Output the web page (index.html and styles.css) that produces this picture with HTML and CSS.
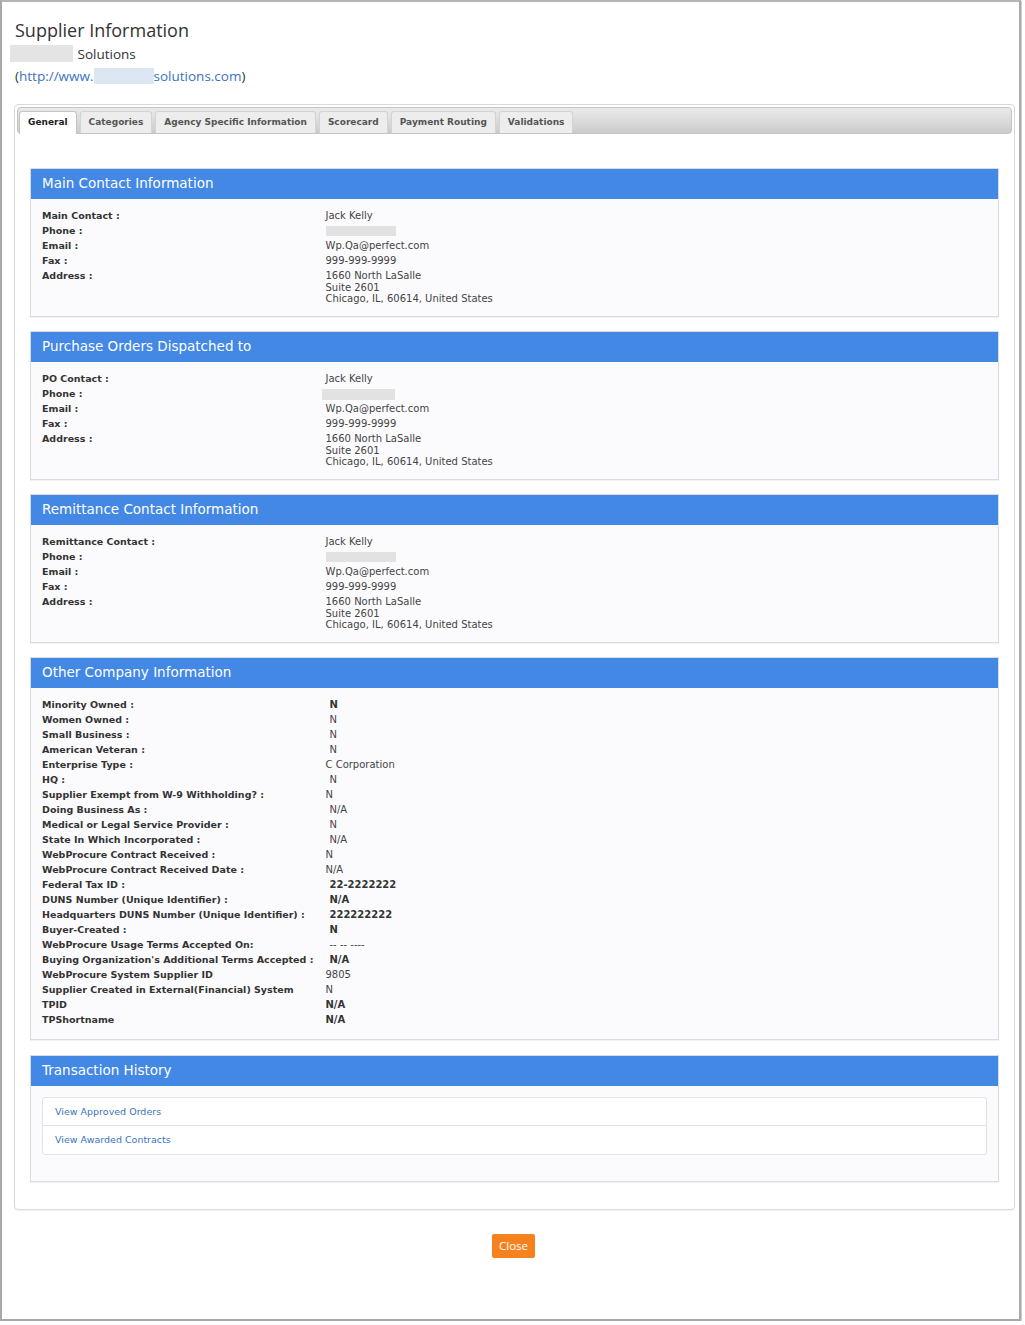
FILE: index.html
```html
<!DOCTYPE html>
<html>
<head>
<meta charset="utf-8">
<title>Supplier Information</title>
<link rel="stylesheet" href="styles.css">
</head>
<body>
<div class="frame">
  <div class="page">
    <h1 class="title">Supplier Information</h1>
    <div class="company"><span class="redact gray"></span> Solutions</div>
    <div class="url">(<a class="link">http://www.<span class="redact blue"></span>solutions.com</a>)</div>

    <div class="tabs">
      <ul class="tabnav">
        <li class="tab active">General</li>
        <li class="tab">Categories</li>
        <li class="tab">Agency Specific Information</li>
        <li class="tab">Scorecard</li>
        <li class="tab">Payment Routing</li>
        <li class="tab">Validations</li>
      </ul>
      <div class="tabbody">

        <section class="panel">
          <h2 class="panel-head">Main Contact Information</h2>
          <div class="panel-body">
            <div class="grid">
              <div class="lbl">Main Contact :</div><div class="val">Jack Kelly</div>
              <div class="lbl">Phone :</div><div class="val"><span class="phone"></span></div>
              <div class="lbl">Email :</div><div class="val">Wp.Qa@perfect.com</div>
              <div class="lbl">Fax :</div><div class="val">999-999-9999</div>
              <div class="lbl">Address :</div><div class="val addr">1660 North LaSalle<br>Suite 2601<br>Chicago, IL, 60614, United States</div>
            </div>
          </div>
        </section>

        <section class="panel">
          <h2 class="panel-head">Purchase Orders Dispatched to</h2>
          <div class="panel-body">
            <div class="grid">
              <div class="lbl">PO Contact :</div><div class="val">Jack Kelly</div>
              <div class="lbl">Phone :</div><div class="val"><span class="phone shift"></span></div>
              <div class="lbl">Email :</div><div class="val">Wp.Qa@perfect.com</div>
              <div class="lbl">Fax :</div><div class="val">999-999-9999</div>
              <div class="lbl">Address :</div><div class="val addr">1660 North LaSalle<br>Suite 2601<br>Chicago, IL, 60614, United States</div>
            </div>
          </div>
        </section>

        <section class="panel">
          <h2 class="panel-head">Remittance Contact Information</h2>
          <div class="panel-body">
            <div class="grid">
              <div class="lbl">Remittance Contact :</div><div class="val">Jack Kelly</div>
              <div class="lbl">Phone :</div><div class="val"><span class="phone"></span></div>
              <div class="lbl">Email :</div><div class="val">Wp.Qa@perfect.com</div>
              <div class="lbl">Fax :</div><div class="val">999-999-9999</div>
              <div class="lbl">Address :</div><div class="val addr">1660 North LaSalle<br>Suite 2601<br>Chicago, IL, 60614, United States</div>
            </div>
          </div>
        </section>

        <section class="panel">
          <h2 class="panel-head">Other Company Information</h2>
          <div class="panel-body other">
            <div class="grid">
              <div class="lbl">Minority Owned :</div><div class="val i b">N</div>
              <div class="lbl">Women Owned :</div><div class="val i">N</div>
              <div class="lbl">Small Business :</div><div class="val i">N</div>
              <div class="lbl">American Veteran :</div><div class="val i">N</div>
              <div class="lbl">Enterprise Type :</div><div class="val">C Corporation</div>
              <div class="lbl">HQ :</div><div class="val i">N</div>
              <div class="lbl">Supplier Exempt from W-9 Withholding? :</div><div class="val">N</div>
              <div class="lbl">Doing Business As :</div><div class="val i">N/A</div>
              <div class="lbl">Medical or Legal Service Provider :</div><div class="val i">N</div>
              <div class="lbl">State In Which Incorporated :</div><div class="val i">N/A</div>
              <div class="lbl">WebProcure Contract Received :</div><div class="val">N</div>
              <div class="lbl">WebProcure Contract Received Date :</div><div class="val">N/A</div>
              <div class="lbl">Federal Tax ID :</div><div class="val i b">22-2222222</div>
              <div class="lbl">DUNS Number (Unique Identifier) :</div><div class="val i b">N/A</div>
              <div class="lbl">Headquarters DUNS Number (Unique Identifier) :</div><div class="val i b">222222222</div>
              <div class="lbl">Buyer-Created :</div><div class="val i b">N</div>
              <div class="lbl">WebProcure Usage Terms Accepted On:</div><div class="val i">-- -- ----</div>
              <div class="lbl">Buying Organization's Additional Terms Accepted :</div><div class="val i b">N/A</div>
              <div class="lbl">WebProcure System Supplier ID</div><div class="val">9805</div>
              <div class="lbl">Supplier Created in External(Financial) System</div><div class="val">N</div>
              <div class="lbl">TPID</div><div class="val b">N/A</div>
              <div class="lbl">TPShortname</div><div class="val b">N/A</div>
            </div>
          </div>
        </section>

        <section class="panel">
          <h2 class="panel-head">Transaction History</h2>
          <div class="panel-body tx">
            <ul class="list">
              <li class="list-item"><a class="link">View Approved Orders</a></li>
              <li class="list-item"><a class="link">View Awarded Contracts</a></li>
            </ul>
          </div>
        </section>

      </div>
    </div>

    <div class="actions"><button class="btn-close">Close</button></div>
  </div>
</div>
</body>
</html>
```

FILE: styles.css
```css
html, body {
  margin: 0;
  padding: 0;
  background: #fff;
}

.frame {
  width: 1017px;
  height: 1317px;
  border: 2px solid #a9a9a9;
  border-top-color: #b5b5b5;
  box-shadow: 1px 1px 0 #d0d0d0;
  background: #fff;
  overflow: hidden;
}

.page {
  padding: 0 4px 0 12px;
  font-family: "DejaVu Sans", Verdana, sans-serif;
  color: #333;
}

.title {
  margin: 0 0 0 1px;
  padding-top: 16px;
  font-family: "Open Sans", "Segoe UI", sans-serif;
  font-weight: 400;
  font-size: 18px;
  line-height: 24px;
  color: #333;
}

.company, .url {
  font-family: "Open Sans", "Segoe UI", sans-serif;
  font-size: 13.5px;
  line-height: 20px;
  color: #333;
  margin: 2px 0 0 1px;
}

.redact {
  display: inline-block;
  vertical-align: middle;
}
.redact.gray {
  width: 63px;
  height: 17px;
  margin-left: -5px;
  margin-right: 1px;
  margin-top: -4px;
  background: #e4e4e4;
}
.redact.blue {
  width: 60px;
  height: 16px;
  margin-top: -2px;
  background: #dde7f3;
}

.link {
  color: #3a73bf;
  text-decoration: none;
}

/* tabs */
.tabs {
  margin-top: 18px;
  border: 1px solid #d9d9d9;
  border-radius: 4px;
  padding: 2px;
  box-shadow: 0 1px 1px rgba(0,0,0,0.06);
}

.tabnav {
  list-style: none;
  margin: 0;
  padding: 3px 2px 0 1px;
  display: flex;
  gap: 3px;
  height: 22px;
  border: 1px solid #c4c4c4;
  border-radius: 4px;
  background: linear-gradient(#ebebeb, #cbcbcb);
}

.tab {
  height: 21px;
  padding: 0 8px;
  font-size: 9px;
  font-weight: 700;
  line-height: 21px;
  color: #555;
  background: #ededed;
  border: 1px solid #d3d3d3;
  border-bottom: none;
  border-radius: 3px 3px 0 0;
}

.tab.active {
  background: #fff;
  color: #222;
  height: 22px;
  border-color: #c4c4c4;
}

.tabbody {
  padding: 34px 13px 25px;
}

/* panels */
.panel {
  border: 1px solid #dcdce0;
  background: #fbfbfd;
  box-shadow: 0 1px 1px rgba(0,0,0,0.05);
  margin-bottom: 14.5px;
}
.panel:last-child { margin-bottom: 0; }

.panel-head {
  margin: 0;
  height: 30px;
  padding: 0 11px;
  background: #4388e4;
  color: #fff;
  font-weight: 400;
  font-size: 13.5px;
  line-height: 29px;
}

.panel-body {
  padding: 9px 11px 11px;
}
.panel-body.other { padding-bottom: 12px; }

.grid {
  display: grid;
  grid-template-columns: 30% 1fr;
}

.lbl {
  font-size: 9.5px;
  font-weight: 700;
  line-height: 15px;
  color: #333;
}

.val {
  font-size: 10px;
  line-height: 14px;
  padding-top: 1px;
  color: #444;
}
.val.i { padding-left: 4px; }
.val.b { font-weight: 700; color: #333; }

.val.addr {
  line-height: 11.5px;
  padding-top: 2px;
}

.phone {
  display: inline-block;
  width: 70px;
  height: 10px;
  background: #e2e2e2;
  vertical-align: middle;
}
.phone.shift { margin-left: -4px; width: 73px; height: 11px; }

.panel-body.tx {
  padding: 11px 11px 26px;
}

.list {
  list-style: none;
  margin: 0;
  padding: 0;
  border: 1px solid #e3e3e6;
  border-radius: 3px;
  background: #fff;
}
.list-item {
  height: 28px;
  padding: 0 12px;
  line-height: 27px;
  font-size: 9.5px;
  border-top: 1px solid #e3e3e6;
}
.list-item:first-child { border-top: none; height: 27px; }

.actions {
  display: flex;
  justify-content: center;
  margin-top: 24px;
  padding-right: 2px;
}

.btn-close {
  width: 43px;
  height: 24px;
  padding: 0;
  border: none;
  border-radius: 2px;
  background: #f5821f;
  color: #fff;
  font-family: "Open Sans", "Segoe UI", sans-serif;
  font-size: 11.5px;
}
```
